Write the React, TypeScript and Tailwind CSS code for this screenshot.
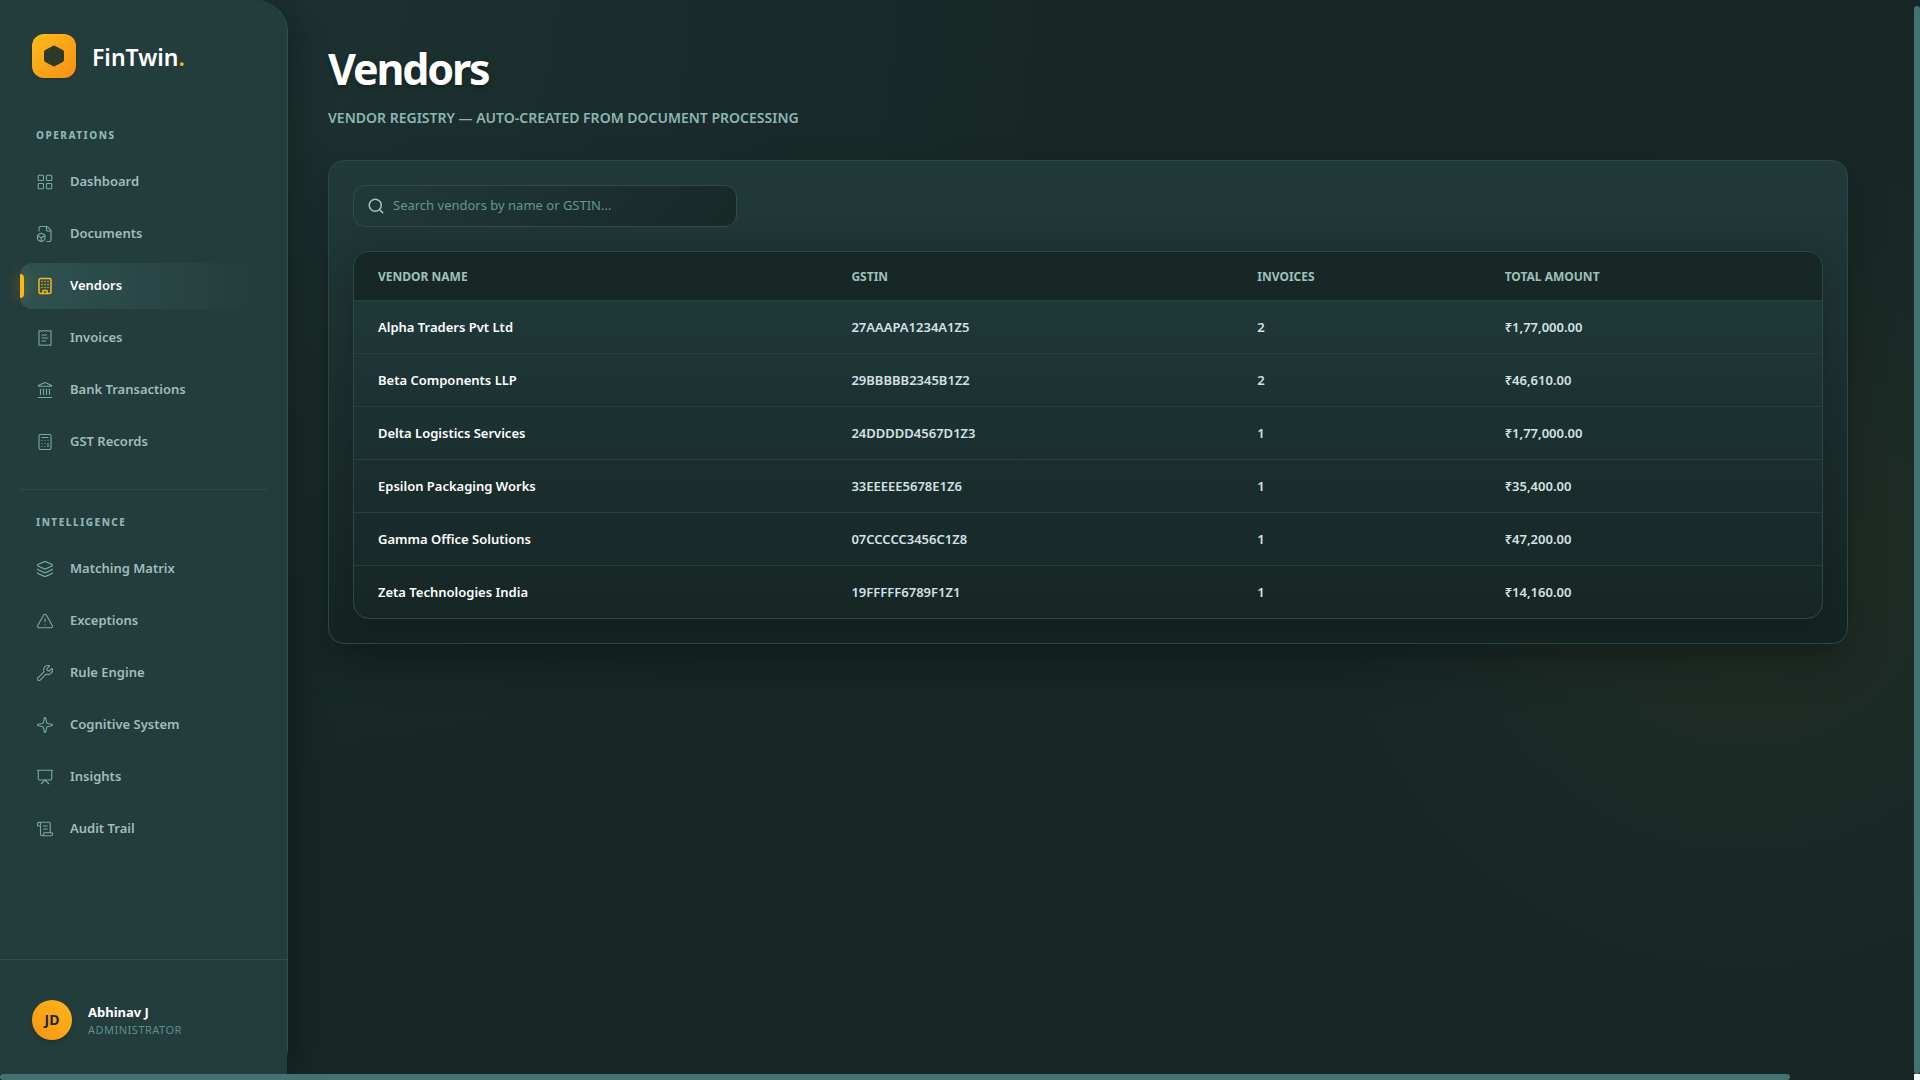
import { useState } from "react";
import {
  Building,
  Calculator,
  FileBox,
  Landmark,
  Layers,
  LayoutGrid,
  Presentation,
  ReceiptText,
  ScrollText,
  Search,
  Sparkle,
  TriangleAlert,
  Wrench,
  type LucideIcon,
} from "lucide-react";

type NavEntry = { label: string; icon: LucideIcon; active?: boolean };

const operations: NavEntry[] = [
  { label: "Dashboard", icon: LayoutGrid },
  { label: "Documents", icon: FileBox },
  { label: "Vendors", icon: Building, active: true },
  { label: "Invoices", icon: ReceiptText },
  { label: "Bank Transactions", icon: Landmark },
  { label: "GST Records", icon: Calculator },
];

const intelligence: NavEntry[] = [
  { label: "Matching Matrix", icon: Layers },
  { label: "Exceptions", icon: TriangleAlert },
  { label: "Rule Engine", icon: Wrench },
  { label: "Cognitive System", icon: Sparkle },
  { label: "Insights", icon: Presentation },
  { label: "Audit Trail", icon: ScrollText },
];

const vendors = [
  { name: "Alpha Traders Pvt Ltd", gstin: "27AAAPA1234A1Z5", invoices: 2, total: "₹1,77,000.00" },
  { name: "Beta Components LLP", gstin: "29BBBBB2345B1Z2", invoices: 2, total: "₹46,610.00" },
  { name: "Delta Logistics Services", gstin: "24DDDDD4567D1Z3", invoices: 1, total: "₹1,77,000.00" },
  { name: "Epsilon Packaging Works", gstin: "33EEEEE5678E1Z6", invoices: 1, total: "₹35,400.00" },
  { name: "Gamma Office Solutions", gstin: "07CCCCC3456C1Z8", invoices: 1, total: "₹47,200.00" },
  { name: "Zeta Technologies India", gstin: "19FFFFF6789F1Z1", invoices: 1, total: "₹14,160.00" },
];

function NavSection({ title, items }: { title: string; items: NavEntry[] }) {
  return (
    <section>
      <h2 className="mb-4 px-4 text-[10px] leading-4 font-extrabold tracking-[1.5px] text-[#8fb5b2] uppercase">
        {title}
      </h2>
      <ul className="flex flex-col gap-1.5">
        {items.map(({ label, icon: Icon, active }) => (
          <li key={label} className="relative">
            {active && (
              <span className="absolute top-[11px] left-0 h-6 w-1 rounded-r-sm bg-[#fcb814] shadow-[0_0_14px_rgba(252,184,20,0.5)]" />
            )}
            <a
              href="#"
              aria-current={active ? "page" : undefined}
              className={
                active
                  ? "flex h-[46px] items-center gap-4 rounded-xl bg-linear-to-r from-[#2f5250] to-transparent px-4 text-[13px] font-semibold text-white"
                  : "flex h-[46px] items-center gap-4 rounded-xl px-4 text-[13px] font-semibold text-[#a1bcba]"
              }
            >
              <Icon
                size={18}
                strokeWidth={active ? 2 : 1.5}
                className={active ? "text-[#fcb814]" : "text-[#78a8a4]"}
              />
              {label}
            </a>
          </li>
        ))}
      </ul>
    </section>
  );
}

function Sidebar() {
  return (
    <aside className="relative flex min-h-screen w-72 shrink-0 flex-col rounded-r-[32px] border-r border-[#2f504f] bg-[#233c3c] shadow-[8px_0_32px_rgba(0,0,0,0.25)]">
      <div className="flex items-center gap-4 px-8 pt-[34px]">
        <div className="flex size-11 items-center justify-center rounded-xl bg-linear-to-br from-[#fbbc17] to-[#f88e17] shadow-sm">
          <svg viewBox="0 0 20 22" className="h-[22px] w-5" aria-hidden="true">
            <path
              d="M8.8.9a2.4 2.4 0 0 1 2.4 0l7.6 4.2A2.4 2.4 0 0 1 20 7.2v7.6a2.4 2.4 0 0 1-1.2 2.1l-7.6 4.2a2.4 2.4 0 0 1-2.4 0l-7.6-4.2A2.4 2.4 0 0 1 0 14.8V7.2a2.4 2.4 0 0 1 1.2-2.1z"
              fill="#2d3a2a"
            />
          </svg>
        </div>
        <span className="pt-0.5 text-[23px] leading-8 font-semibold text-white">
          FinTwin<span className="text-[#fcb814]">.</span>
        </span>
      </div>

      <nav className="mt-[49px] px-5">
        <NavSection title="Operations" items={operations} />
        <hr className="my-6 border-[#2b4a49]" />
        <NavSection title="Intelligence" items={intelligence} />
      </nav>

      <div className="mt-auto flex h-[121px] items-center gap-4 border-t border-[#2f504f] bg-[#233c3c] px-8">
        <div className="flex size-10 items-center justify-center rounded-full bg-linear-to-tr from-[#f99316] to-[#fbb717] text-sm font-bold text-[#182727] shadow-md">
          JD
        </div>
        <div className="flex flex-col pt-0.5">
          <span className="text-[13px] leading-[18px] font-bold text-white">Abhinav J</span>
          <span className="text-[11px] leading-[18px] tracking-[0.5px] text-[#5e8f8b]">ADMINISTRATOR</span>
        </div>
      </div>
    </aside>
  );
}

export default function App() {
  const [query, setQuery] = useState("");
  const needle = query.trim().toLowerCase();
  const rows = vendors.filter(
    (v) => v.name.toLowerCase().includes(needle) || v.gstin.toLowerCase().includes(needle),
  );

  return (
    <div className="flex min-h-screen bg-[#162726] bg-[radial-gradient(circle_at_15%_0%,rgba(47,82,80,0.24)_0%,transparent_40%),radial-gradient(circle_at_91%_52%,rgba(251,160,23,0.055)_0%,transparent_24%)] font-['Noto_Sans',sans-serif]">
      <Sidebar />

      <main className="min-w-0 flex-1 py-10 pr-[72px] pl-10">
        <h1 className="text-[43px] leading-[58px] font-bold tracking-tighter text-white [text-shadow:0_2px_4px_rgba(0,0,0,0.3)]">
          Vendors
        </h1>
        <p className="mt-2.5 text-sm leading-5 font-semibold text-[#8fb5b2] uppercase">
          Vendor Registry — Auto-created from document processing
        </p>

        <section className="mt-8 rounded-2xl border border-[#2a4a48] bg-linear-to-b from-[#213a39] to-[#152423] p-6 shadow-[0_20px_40px_rgba(0,0,0,0.25)]">
          <div className="flex h-[42px] w-96 items-center gap-2 rounded-xl border border-[#2c4d4b] bg-[linear-gradient(135deg,#213a39,#172827)] px-[13px]">
            <Search size={18} className="shrink-0 text-[#a1c4c0]" />
            <input
              type="text"
              aria-label="Search vendors"
              value={query}
              onChange={(e) => setQuery(e.target.value)}
              placeholder="Search vendors by name or GSTIN..."
              className="min-w-0 flex-1 bg-transparent text-[13px] text-white outline-none placeholder:text-[#659692]"
            />
          </div>

          <div className="mt-6 overflow-hidden rounded-2xl border border-[#2a4a48] bg-linear-to-b from-[#203b3b] to-[#162625] shadow-[0_8px_32px_rgba(0,0,0,0.2)]">
            <table className="w-full table-fixed border-collapse text-left text-[13px] leading-5 font-semibold">
              <colgroup>
                <col className="w-[32.25%]" />
                <col className="w-[27.65%]" />
                <col className="w-[16.85%]" />
                <col />
              </colgroup>
              <thead>
                <tr className="h-12 border-b border-[#25403e] bg-[#162726] text-xs text-[#9fc0ba] uppercase">
                  <th className="px-6 pt-0.5 font-bold">Vendor Name</th>
                  <th className="px-6 pt-0.5 font-bold">GSTIN</th>
                  <th className="px-6 pt-0.5 font-bold">Invoices</th>
                  <th className="px-6 pt-0.5 font-bold">Total Amount</th>
                </tr>
              </thead>
              <tbody className="text-[#d5e0e4]">
                {rows.map((v) => (
                  <tr key={v.gstin} className="h-[53px] border-b border-[#25403e] last:border-b-0">
                    <td className="px-6 text-white">{v.name}</td>
                    <td className="px-6">{v.gstin}</td>
                    <td className="px-6">{v.invoices}</td>
                    <td className="px-6">{v.total}</td>
                  </tr>
                ))}
              </tbody>
            </table>
          </div>
        </section>
      </main>

      {/* Scroll tracks along the window edges */}
      <div aria-hidden="true" className="fixed inset-y-0 right-0 flex w-1.5 flex-col bg-[#162726] pt-1.5">
        <div className="flex-1 rounded-full bg-[#437370]" />
        <div className="h-1.5 bg-white" />
      </div>
      <div aria-hidden="true" className="fixed right-1.5 bottom-0 left-0 h-1.5 bg-[#162726]">
        <div className="h-full w-[93.5%] rounded-full bg-[#437370]" />
      </div>
    </div>
  );
}
